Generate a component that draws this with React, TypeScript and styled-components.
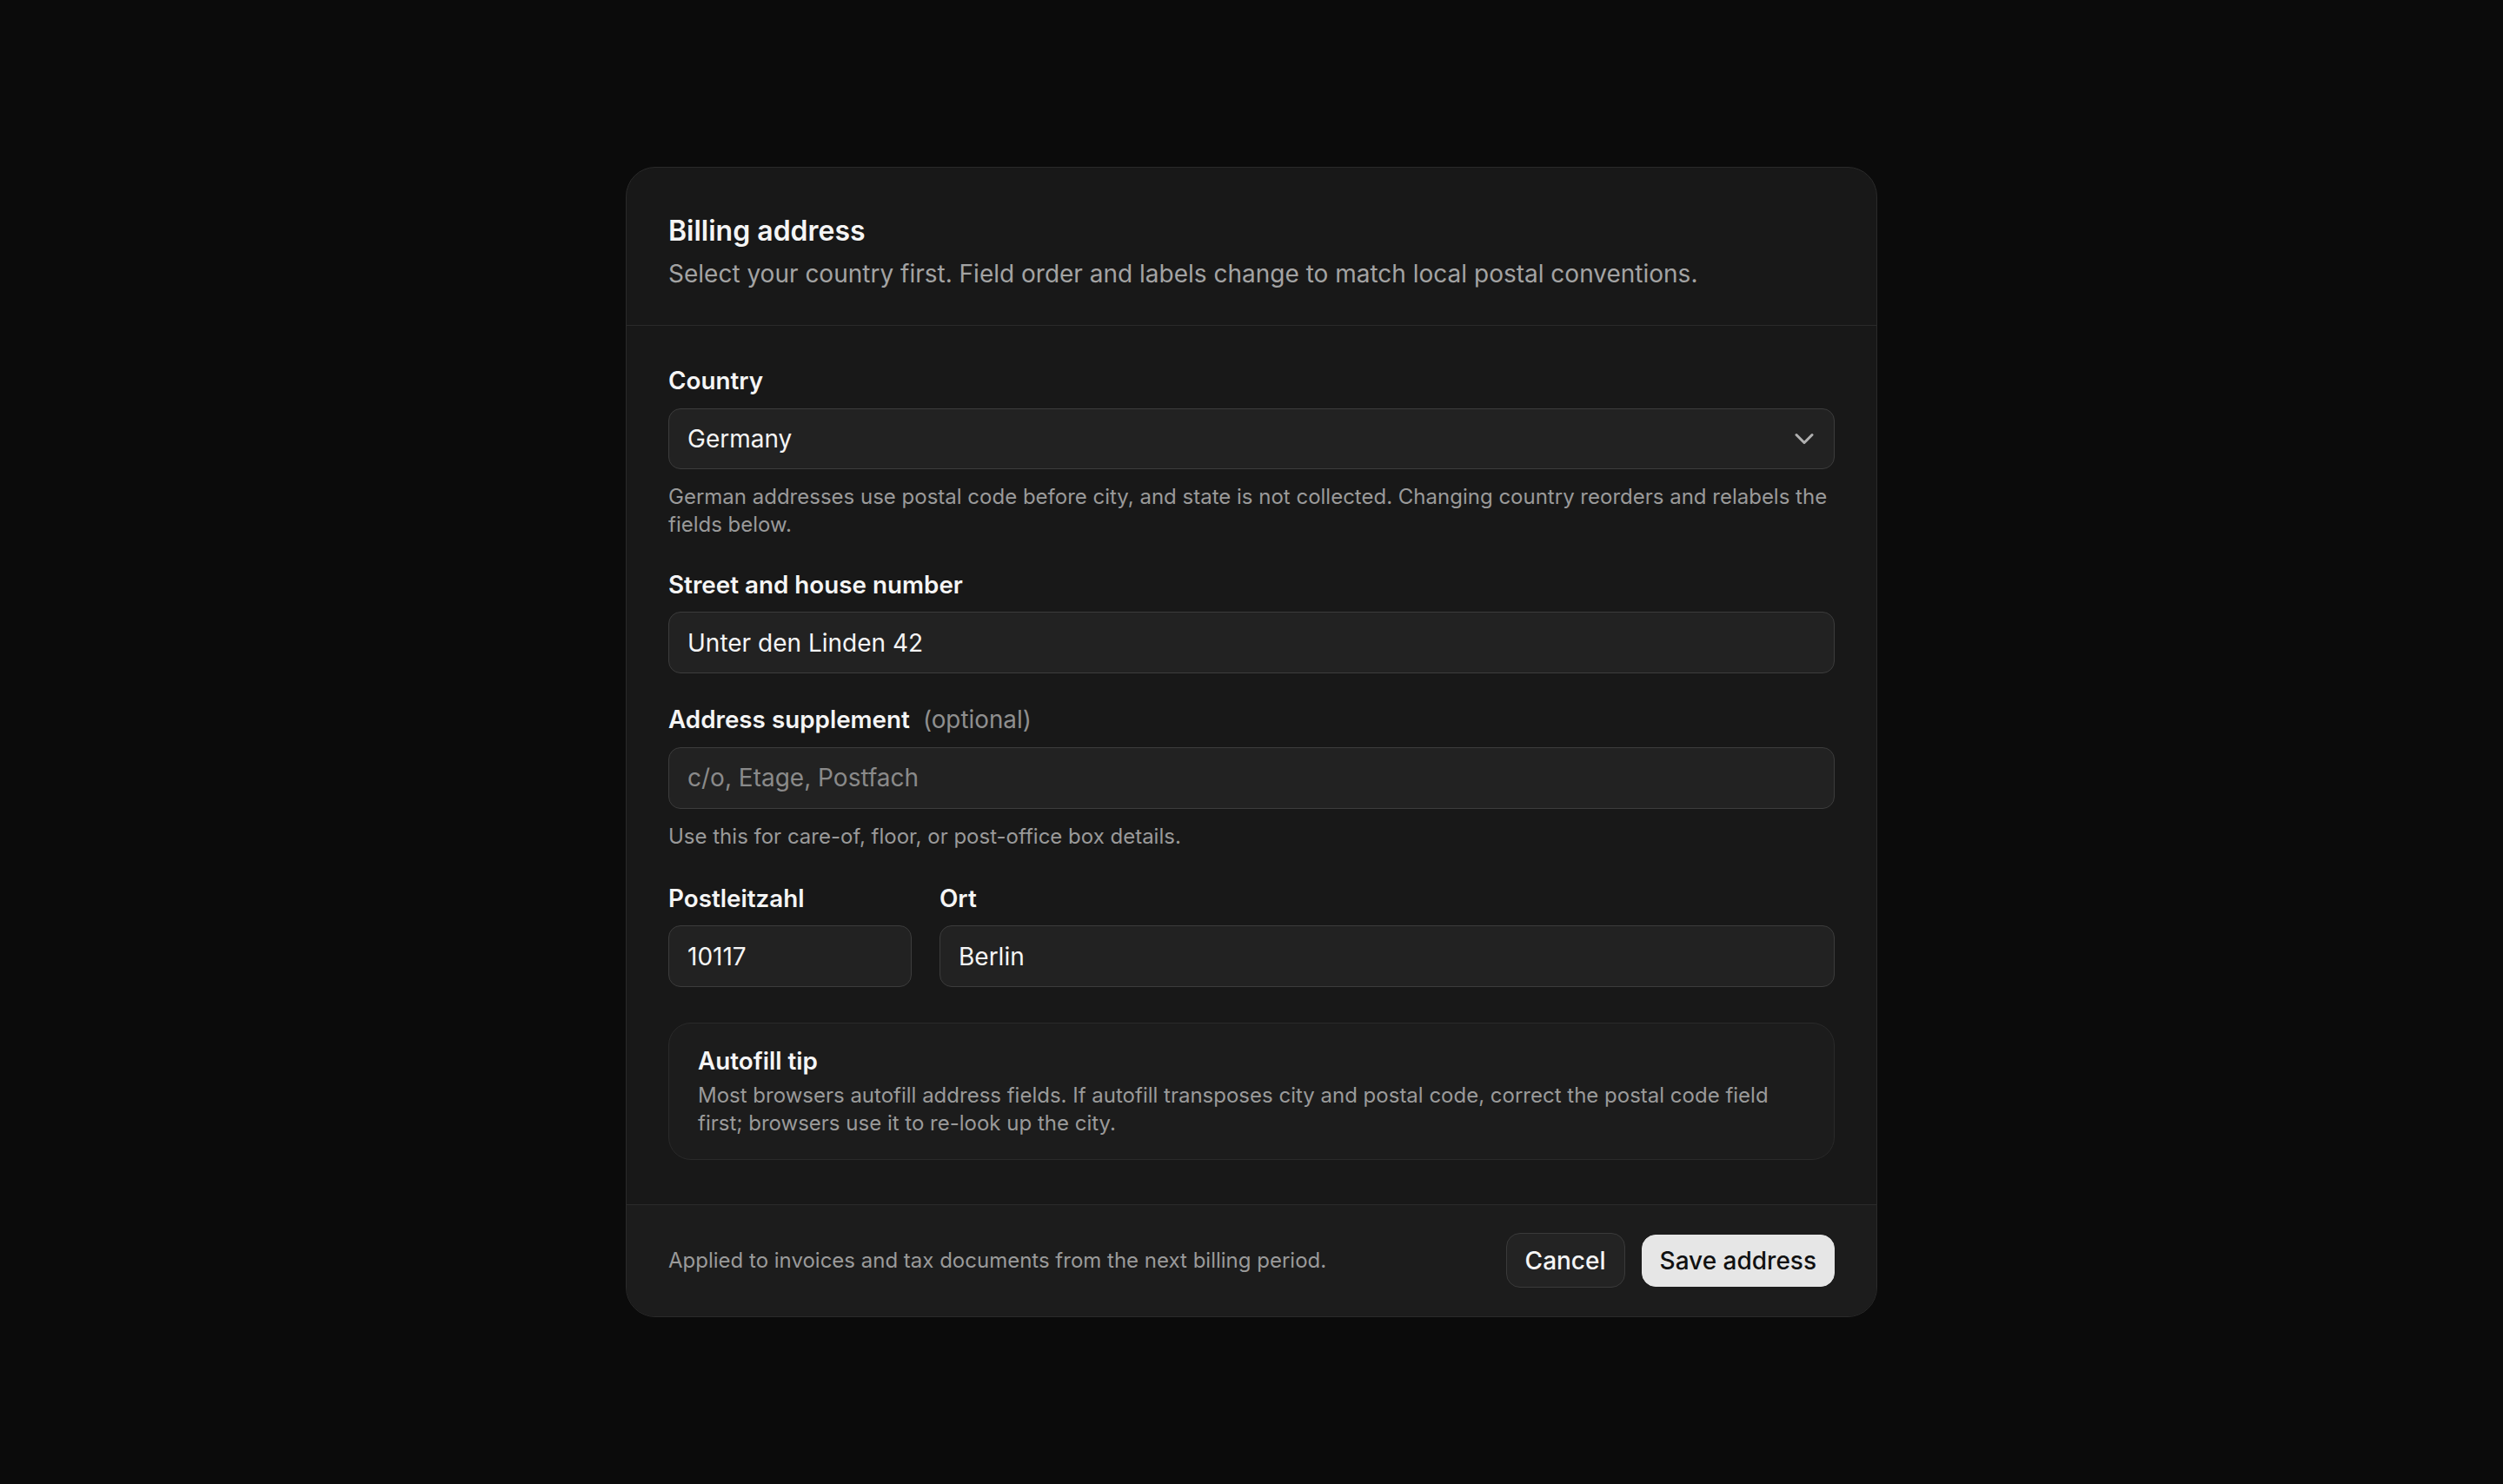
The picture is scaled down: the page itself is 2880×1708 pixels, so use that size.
import styled, { createGlobalStyle } from "styled-components";
import { ChevronDown } from "lucide-react";

const GlobalStyle = createGlobalStyle`
  * { box-sizing: border-box; }
  body {
    margin: 0;
    background: #0b0b0b;
    font-family: Inter, "Noto Sans", sans-serif;
    color: #f5f5f5;
  }
`;

const Page = styled.div`
  min-height: 100vh;
  display: flex;
  align-items: center;
  justify-content: center;
`;

const Card = styled.form`
  width: 1440px;
  background: #181818;
  border: 1px solid #2a2a2a;
  border-radius: 34px;
  overflow: hidden;
`;

const Header = styled.div`
  padding: 49px 48px 38px;
  border-bottom: 1px solid #2a2a2a;
`;

const Title = styled.h2`
  margin: 0;
  font-size: 32px;
  line-height: 48px;
  font-weight: 600;
  color: #f5f5f5;
`;

const Subtitle = styled.p`
  margin: 4px 0 0;
  font-size: 28px;
  line-height: 42px;
  color: #a3a3a3;
`;

const Body = styled.div`
  padding: 44px 48px 51px;
  display: flex;
  flex-direction: column;
  gap: 34px;
`;

const Field = styled.div`
  display: flex;
  flex-direction: column;
  min-width: 0;
`;

const Label = styled.label`
  font-size: 27.8px;
  line-height: 38.5px;
  font-weight: 600;
  color: #f5f5f5;
  margin-bottom: 12px;
`;

const Optional = styled.span`
  font-weight: 400;
  color: #8f8f8f;
  margin-left: 15px;
`;

const Input = styled.input`
  height: 71px;
  width: 100%;
  padding: 0 21px;
  background: #222222;
  border: 1.5px solid #3c3c3c;
  border-radius: 14px;
  font-family: inherit;
  font-size: 28px;
  color: #f5f5f5;
  outline: none;

  &::placeholder {
    color: #8a8a8a;
  }
`;

const SelectWrap = styled.div`
  position: relative;
`;

const Select = styled.select`
  appearance: none;
  height: 70px;
  width: 100%;
  padding: 0 60px 0 21px;
  background: #222222;
  border: 1.5px solid #3c3c3c;
  border-radius: 14px;
  font-family: inherit;
  font-size: 28px;
  color: #f5f5f5;
  outline: none;
`;

const Chevron = styled.span`
  position: absolute;
  right: 17px;
  top: 50%;
  transform: translateY(-50%);
  display: flex;
  color: #b0b0b0;
  pointer-events: none;
`;

const Help = styled.p`
  margin: 16px 0 0;
  font-size: 24px;
  line-height: 32px;
  color: #9a9a9a;
`;

const Row = styled.div`
  display: grid;
  grid-template-columns: 280px 1fr;
  gap: 32px;
  margin-top: 2px;
`;

const Tip = styled.div`
  margin-top: 7px;
  padding: 24px 33px 25px;
  background: #1c1c1c;
  border: 1px solid #2a2a2a;
  border-radius: 26px;
`;

const TipTitle = styled.div`
  font-size: 27.8px;
  line-height: 38.5px;
  font-weight: 600;
  color: #f5f5f5;
`;

const TipText = styled.p`
  margin: 4px 0 0;
  font-size: 24px;
  line-height: 32px;
  color: #9a9a9a;
`;

const Footer = styled.div`
  display: flex;
  align-items: center;
  justify-content: space-between;
  padding: 32px 48px 32px;
  min-height: 129px;
  background: #1c1c1c;
  border-top: 1px solid #2a2a2a;
`;

const FooterNote = styled.span`
  font-size: 24px;
  color: #9a9a9a;
`;

const Actions = styled.div`
  display: flex;
  align-items: center;
  gap: 19px;
`;

const Button = styled.button<{ $primary?: boolean }>`
  height: ${(p) => (p.$primary ? "60px" : "63px")};
  padding: 0 ${(p) => (p.$primary ? "20px" : "21px")};
  border-radius: 16px;
  border: 1.5px solid ${(p) => (p.$primary ? "#e6e6e6" : "#3a3a3a")};
  background: ${(p) => (p.$primary ? "#e6e6e6" : "#232323")};
  color: ${(p) => (p.$primary ? "#111111" : "#f5f5f5")};
  font-family: inherit;
  font-size: 28px;
  font-weight: 500;
  cursor: pointer;
`;

export default function App() {
  return (
    <Page>
      <GlobalStyle />
      <Card onSubmit={(e) => e.preventDefault()}>
        <Header>
          <Title>Billing address</Title>
          <Subtitle>
            Select your country first. Field order and labels change to match local postal conventions.
          </Subtitle>
        </Header>
        <Body>
          <Field>
            <Label htmlFor="country">Country</Label>
            <SelectWrap>
              <Select id="country" defaultValue="DE">
                <option value="DE">Germany</option>
                <option value="US">United States</option>
                <option value="FR">France</option>
              </Select>
              <Chevron>
                <ChevronDown size={36} strokeWidth={2} />
              </Chevron>
            </SelectWrap>
            <Help>
              German addresses use postal code before city, and state is not collected. Changing country
              reorders and relabels the fields below.
            </Help>
          </Field>

          <Field>
            <Label htmlFor="street">Street and house number</Label>
            <Input id="street" defaultValue="Unter den Linden 42" />
          </Field>

          <Field>
            <Label htmlFor="supplement">
              Address supplement<Optional>(optional)</Optional>
            </Label>
            <Input id="supplement" placeholder="c/o, Etage, Postfach" />
            <Help>Use this for care-of, floor, or post-office box details.</Help>
          </Field>

          <Row>
            <Field>
              <Label htmlFor="plz">Postleitzahl</Label>
              <Input id="plz" defaultValue="10117" />
            </Field>
            <Field>
              <Label htmlFor="ort">Ort</Label>
              <Input id="ort" defaultValue="Berlin" />
            </Field>
          </Row>

          <Tip>
            <TipTitle>Autofill tip</TipTitle>
            <TipText>
              Most browsers autofill address fields. If autofill transposes city and postal code, correct the
              postal code field first; browsers use it to re-look up the city.
            </TipText>
          </Tip>
        </Body>
        <Footer>
          <FooterNote>Applied to invoices and tax documents from the next billing period.</FooterNote>
          <Actions>
            <Button type="button">Cancel</Button>
            <Button type="submit" $primary>
              Save address
            </Button>
          </Actions>
        </Footer>
      </Card>
    </Page>
  );
}
